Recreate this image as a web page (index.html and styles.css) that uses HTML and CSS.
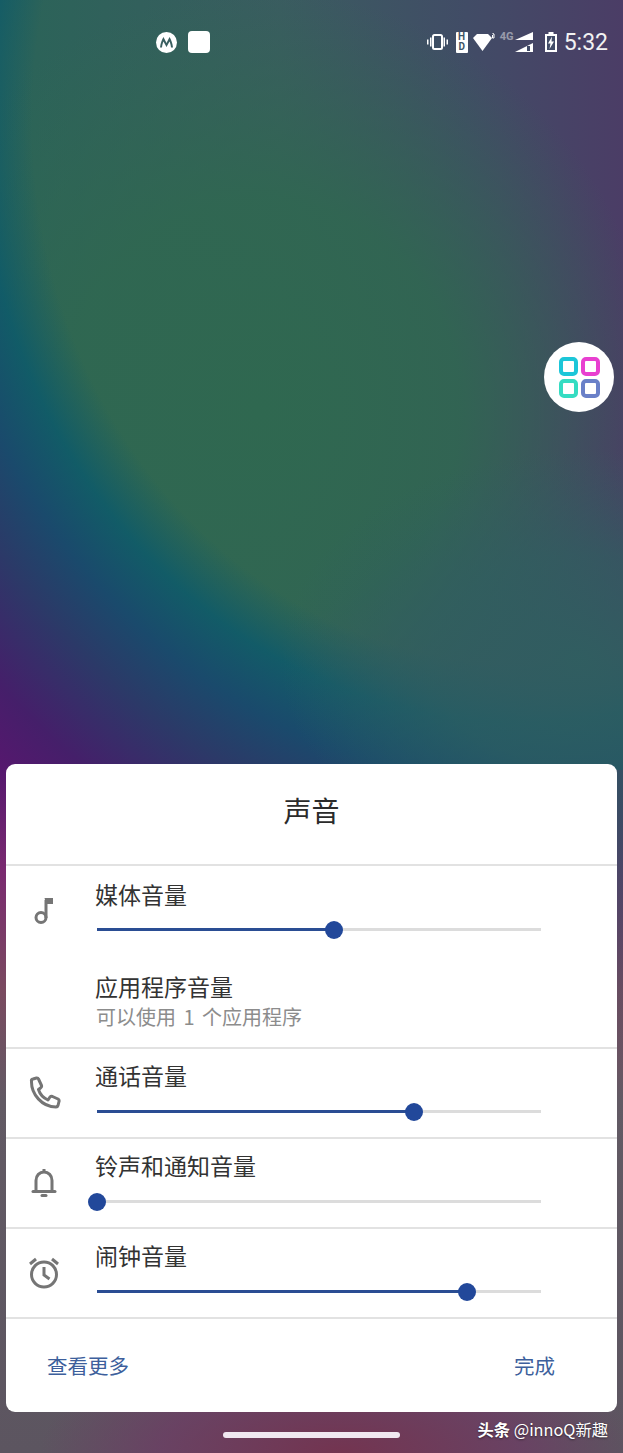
FILE: index.html
```html
<!DOCTYPE html>
<html>
<head>
  <title>声音</title>
  <link rel="stylesheet" href="styles.css">
</head>
<body>

<!-- Status bar -->
<div class="status">
  <div class="status-left">
    <svg class="moto" width="21" height="21" viewBox="0 0 21 21">
      <circle cx="10.5" cy="10.5" r="10.5" fill="#fff"/>
      <path d="M4 15.5 C4.500 11 6 7.500 7.500 5 L10.500 11 L13.500 5 C15 7.500 16.500 11 17 15.500 L15 15.500 C14.800 13 14.200 11 13.500 9.500 L10.500 15 L7.500 9.500 C6.800 11 6.200 13 6 15.500 Z" fill="#3a5f60"/>
    </svg>
    <div class="app-square"></div>
  </div>
  <div class="status-right">
    <svg class="vib" width="21" height="16" viewBox="0 0 21 16" fill="#fff">
      <rect x="6" y="1" width="9" height="14" rx="1.5" fill="none" stroke="#fff" stroke-width="2"/>
      <rect x="3" y="3.500" width="1.500" height="9"/><rect x="0" y="5.500" width="1.500" height="5"/>
      <rect x="16.500" y="3.500" width="1.500" height="9"/><rect x="19.500" y="5.500" width="1.500" height="5"/>
    </svg>
    <div class="hd"><span>H</span><span>D</span></div>
    <svg class="wifi" width="22" height="18" viewBox="0 0 22 18" fill="#fff">
      <path d="M0 5 L4 1 H15 L19 5 L9.500 18 Z"/>
      <path d="M20 0 V1 H21 V5 H19.500 V2" fill="none" stroke="#fff" stroke-width="1"/>
    </svg>
    <span class="net">4G</span>
    <svg class="signal" width="18" height="20" viewBox="0 0 18 20" fill="#fff">
      <path d="M18 0 V8 H0 Z"/>
      <path d="M18 11 V20 H0 Z"/>
      <rect x="12" y="14" width="3" height="5" fill="#424c68"/>
    </svg>
    <svg class="batt" width="12" height="20" viewBox="0 0 12 20" fill="#fff">
      <path d="M3.500 0 H8.500 V2 H12 V20 H0 V2 H3.500 Z"/>
      <rect x="2" y="4" width="8" height="14" fill="#424c68"/>
      <path d="M7 4.500 L3 11.500 H5.500 L4.500 17 L9 9.500 H6.500 Z"/>
    </svg>
    <span class="clock">5:32</span>
  </div>
</div>

<!-- Floating button -->
<div class="fab">
  <div class="fab-grid">
    <i class="c1"></i><i class="c2"></i><i class="c3"></i><i class="c4"></i>
  </div>
</div>

<!-- Volume sheet -->
<div class="sheet">
  <div class="title">声音</div>

  <div class="group">
    <div class="row first">
      <svg class="icon" viewBox="0 0 34 34" fill="none" stroke="#757575" stroke-width="3">
        <circle cx="14" cy="23.500" r="5"/>
        <path d="M19 24 V6"/>
        <path d="M17.500 4 H26 V10 H19 Z" fill="#757575" stroke="none"/>
      </svg>
      <div class="body">
        <div class="label">媒体音量</div>
        <div class="track"><div class="fill" style="width:53.4%"></div><div class="thumb" style="left:53.4%"></div></div>
      </div>
    </div>
    <div class="apps">
      <div class="label">应用程序音量</div>
      <div class="sub">可以使用 1 个应用程序</div>
    </div>
  </div>

  <div class="row bordered">
    <svg class="icon" viewBox="0 0 34 34" fill="none" stroke="#757575" stroke-width="3" stroke-linejoin="round">
      <path d="M4.500 5 Q4 3.500 6 3 L9.500 2 Q11 1.800 11.500 3 L14.500 9.500 Q15 11 13.500 12 L11.500 13.500 C13 18.500 16.500 22 21 24 L23 21 Q24 20 25.500 20.500 L31 23 Q32.500 24 32 25.500 L31 29.500 Q30.500 31 29 31 C15 31 4 18 4.500 5 Z"/>
    </svg>
    <div class="body">
      <div class="label">通话音量</div>
      <div class="track"><div class="fill" style="width:71.4%"></div><div class="thumb" style="left:71.4%"></div></div>
    </div>
  </div>

  <div class="row bordered">
    <svg class="icon" viewBox="0 0 34 34" fill="none" stroke="#757575" stroke-width="3">
      <path d="M9 25 V14.500 C9 9.500 12.500 6 17 6 C21.500 6 25 9.500 25 14.500 V25"/>
      <path d="M6 25.500 H28" stroke-linecap="round"/>
      <path d="M17 6 V3"/>
      <path d="M15 29.500 H19" stroke-linecap="round"/>
    </svg>
    <div class="body">
      <div class="label">铃声和通知音量</div>
      <div class="track"><div class="thumb" style="left:0%"></div></div>
    </div>
  </div>

  <div class="row bordered">
    <svg class="icon" viewBox="0 0 34 34" fill="none" stroke="#757575" stroke-width="3">
      <circle cx="17" cy="18.500" r="12.500"/>
      <path d="M17 11 V19 L22.500 23"/>
      <path d="M3 8 L9 3"/>
      <path d="M31 8 L25 3"/>
    </svg>
    <div class="body">
      <div class="label">闹钟音量</div>
      <div class="track"><div class="fill" style="width:83.3%"></div><div class="thumb" style="left:83.3%"></div></div>
    </div>
  </div>

  <div class="footer">
    <span>查看更多</span>
    <span>完成</span>
  </div>
</div>

<!-- Bottom strip -->
<div class="home-bar"></div>
<div class="mark"><b>头条</b> @innoQ新趣</div>

</body>
</html>
```
FILE: styles.css
```css
html, body { margin: 0; padding: 0; }
body {
  position: relative;
  width: 623px;
  height: 1453px;
  overflow: hidden;
  font-family: "Noto Sans CJK SC", "Noto Sans", sans-serif;
  background-color: #5c5560;
  background-repeat: no-repeat;
  /* wallpaper: first four layers fill the top 770px, the last three the strip below */
  background-image:
    radial-gradient(ellipse 300px 210px at 580px 660px, rgba(47,95,96,.95) 0%, rgba(47,95,96,.7) 50%, rgba(47,95,96,0) 100%),
    radial-gradient(ellipse 530px 590px at 520px 120px,
      rgba(8,88,110,0) 0%, rgba(8,88,110,0) 92%, rgba(8,88,110,.75) 102%,
      #1a4a6c 112%, #2b3a68 122%, #451f6a 137%, #55186e 147%),
    radial-gradient(ellipse 400px 420px at 260px 410px, #2f6850 0%, rgba(47,104,80,.85) 50%, rgba(47,104,80,0) 100%),
    linear-gradient(to right, #2a6458 0%, #3a5c60 45%, #414c66 75%, #4b3d66 100%),
    radial-gradient(ellipse 200px 300px at 640px 0, rgba(50,85,98,1) 0%, rgba(50,85,98,0) 100%),
    radial-gradient(ellipse 300px 120px at 340px 683px, rgba(115,52,80,1) 0%, rgba(110,58,100,.7) 60%, rgba(110,58,100,0) 100%),
    linear-gradient(to bottom, #55186e 0%, #7a2a70 100px, #7a4a60 220px, #625a64 330px, #5c5560 100%);
  background-size: 100% 770px, 100% 770px, 100% 770px, 100% 770px, 100% 683px, 100% 683px, 100% 683px;
  background-position: 0 0, 0 0, 0 0, 0 0, 0 770px, 0 770px, 0 770px;
}

/* Status bar */
.status {
  display: flex;
  justify-content: space-between;
  align-items: center;
  height: 24px;
  padding: 30px 15px 0 156px;
  color: #fff;
}
.status-left { display: flex; align-items: center; gap: 11px; }
.app-square { width: 22px; height: 22px; background: #fff; border-radius: 4px; }
.status-right { display: flex; align-items: center; }
.status-right svg { flex: none; }
.hd {
  display: flex;
  flex-direction: column;
  width: 12px;
  height: 21px;
  margin-left: 8px;
  background: #fff;
  border-radius: 1px;
  font-family: "Roboto", sans-serif;
  font-size: 10px;
  font-weight: 700;
  line-height: 10.500px;
  text-align: center;
  color: #3f5568;
}
.wifi { margin-left: 5px; margin-top: -1px; }
.net {
  width: 16px;
  margin: -12px 0 0 5px;
  font-family: "Roboto", sans-serif;
  font-size: 11px;
  font-weight: 700;
  opacity: .45;
}
.signal { margin-left: -1px; }
.batt { margin-left: 12px; }
.clock {
  margin-left: 7px;
  font-family: "Roboto", sans-serif;
  font-size: 23px;
  color: #f2f2f2;
}

/* Floating button */
.fab {
  position: absolute;
  left: 544px;
  top: 342px;
  width: 70px;
  height: 70px;
  background: #fff;
  border-radius: 50%;
  display: flex;
  align-items: center;
  justify-content: center;
}
.fab-grid { display: grid; grid-template-columns: 19px 19px; gap: 3px; }
.fab-grid i { width: 11px; height: 11px; border: 4px solid; border-radius: 5px; }
.fab-grid .c1 { border-color: #1cc6d8; }
.fab-grid .c2 { border-color: #e83fd0; }
.fab-grid .c3 { border-color: #35dcc2; }
.fab-grid .c4 { border-color: #6a80c8; }

/* Sheet */
.sheet {
  position: absolute;
  left: 6px;
  top: 764px;
  width: 611px;
  height: 648px;
  background: #fff;
  border-radius: 9px;
  display: flex;
  flex-direction: column;
}
.title {
  height: 100px;
  border-bottom: 2px solid #e2e2e2;
  text-align: center;
  font-size: 28px;
  line-height: 92px;
  color: #2b2b2b;
}
.group { height: 181px; }
.row {
  display: flex;
  height: 89px;
  box-sizing: border-box;
}
.bordered { height: 90px; border-top: 2px solid #e2e2e2; }
.icon { flex: none; width: 34px; height: 34px; margin: 27px 0 0 21px; }
.first .icon { margin-top: 28px; }
.body { flex: none; width: 445px; margin-left: 35px; padding-top: 9px; }
.first .body { padding-top: 11px; }
.label { margin-left: -1px; font-size: 23px; line-height: 34px; color: #333; }
.track {
  position: relative;
  height: 3px;
  margin: 18px 0 0 1px;
  background: #dcdcdc;
}
.first .track { margin-top: 17px; }
.fill { height: 3px; background: #2a4d93; }
.thumb {
  position: absolute;
  top: -7px;
  width: 18px;
  height: 18px;
  margin-left: -9px;
  background: #22489a;
  border-radius: 50%;
}
.apps { padding: 14px 0 0 90px; }
.sub {
  margin-top: 1px;
  font-size: 20px;
  line-height: 26px;
  word-spacing: 3px;
  color: #8c8c8c;
}
.footer {
  flex: 1;
  display: flex;
  justify-content: space-between;
  align-items: center;
  padding: 0 62px 2px 41px;
  border-top: 2px solid #e2e2e2;
  font-size: 20.500px;
  color: #3d5f9c;
}

/* Bottom strip */
.home-bar {
  position: absolute;
  left: 223px;
  top: 1432px;
  width: 177px;
  height: 6px;
  background: #f0e8f0;
  border-radius: 3px;
}
.mark {
  position: absolute;
  right: 15px;
  top: 1417px;
  font-size: 16.300px;
  line-height: 24px;
  color: #fff;
  text-shadow: 0 1px 2px rgba(0,0,0,.5);
}
```
